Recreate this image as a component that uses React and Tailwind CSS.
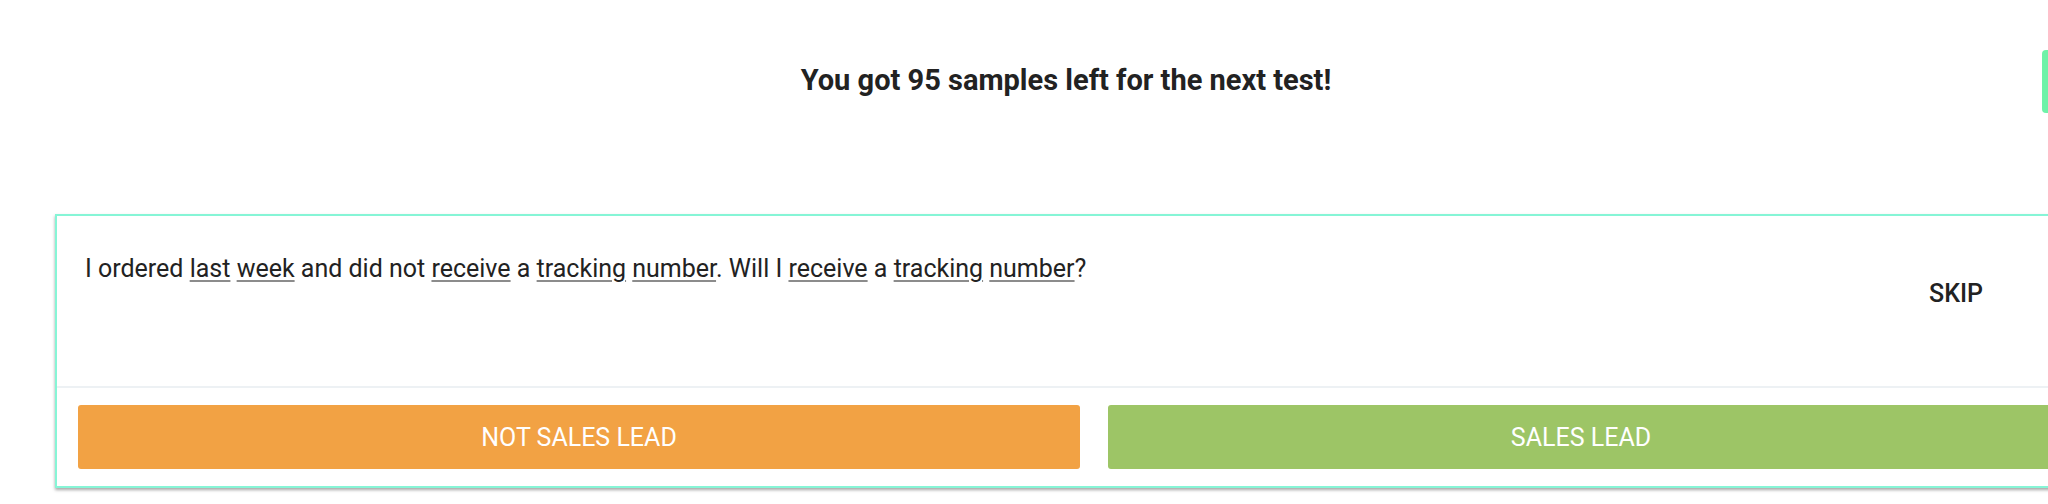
const Word = ({ children }) => (
  <span className="underline decoration-[#8c8c8c] decoration-[1.5px] underline-offset-[3px]">
    {children}
  </span>
);

const App = () => {
  return (
    <div className="min-h-screen w-full overflow-hidden bg-white font-['Roboto',sans-serif] text-[#222]">
      <div className="w-[2132px]">
        <h1 className="pt-[62px] text-center text-[29px] font-bold leading-[36px]">
          You got 95 samples left for the next test!
        </h1>

        <div className="mx-[55px] mt-[116px] border-2 border-[#86f5d6] bg-white shadow-[0_2px_3px_rgba(0,0,0,0.35)]">
          <div className="flex h-[170px]">
            <p className="flex-1 pl-[28px] pt-[37px] text-[25px] leading-[32px]">
              I ordered <Word>last</Word> <Word>week</Word> and did not{" "}
              <Word>receive</Word> a <Word>tracking</Word> <Word>number</Word>.
              Will I <Word>receive</Word> a <Word>tracking</Word>{" "}
              <Word>number</Word>?
            </p>
            <div className="pr-[92px] pt-[62px]">
              <button className="text-[25px] font-medium leading-[32px]">SKIP</button>
            </div>
          </div>

          <div className="grid grid-cols-[1002px_946px] gap-[28px] border-t-2 border-[#edf1f4] px-[21px] pb-[17px] pt-[17px]">
            <button className="h-[64px] rounded-[3px] bg-[#f2a244] text-[25px] leading-none text-white">
              NOT SALES LEAD
            </button>
            <button className="h-[64px] rounded-[3px] bg-[#9dc566] text-[25px] leading-none text-white">
              SALES LEAD
            </button>
          </div>
        </div>
      </div>

      <div className="fixed right-0 top-[50px] h-[63px] w-[6px] rounded-l-[4px] bg-[#6ef2a8]" />
    </div>
  );
};

export default App;
